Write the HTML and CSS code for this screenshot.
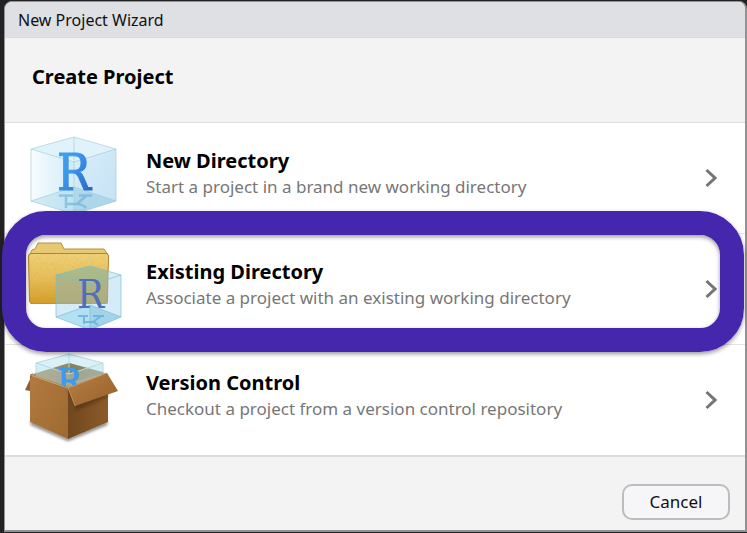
FILE: index.html
```html
<!DOCTYPE html>
<html lang="en">
<head>
<meta charset="utf-8">
<title>New Project Wizard</title>
<link rel="stylesheet" href="styles.css">
</head>
<body>
<main class="dialog">
  <header class="titlebar">New Project Wizard</header>
  <h1 class="heading">Create Project</h1>
  <div class="options">
    <button class="option" type="button">
      <svg class="icon" viewBox="24 123 100 110" aria-hidden="true">
        <defs>
          <linearGradient id="ink" x1="0" y1="0" x2="1" y2="1"><stop offset="0" stop-color="#3fa4f4"/><stop offset=".4" stop-color="#3c98ec"/><stop offset="1" stop-color="#2359c0"/></linearGradient>
          <linearGradient id="glassL"><stop offset="0" stop-color="#f7fcff"/><stop offset="1" stop-color="#d2ecf8"/></linearGradient>
          <linearGradient id="glassR" x1="0" y1="0" x2="1" y2="1"><stop offset="0" stop-color="#d9eefa"/><stop offset="1" stop-color="#c3e1f4"/></linearGradient>
        </defs>
        <path d="M31 149 74 137 116 149V201L74 214 31 201Z" fill="#e0f3fa"/>
        <path d="M31 149 74 162V214L31 201Z" fill="url(#glassL)"/>
        <path d="M74 162 116 149V201L74 214Z" fill="url(#glassR)"/>
        <path d="M31 201 74 187 116 201 74 214Z" fill="#a9d8ec" opacity=".45"/>
        <path d="M74 187 116 201 74 214Z" fill="#8ec5df" opacity=".3"/>
        <path d="M31 149 74 137 116 149V201L74 214 31 201ZM31 149 74 162 116 149M74 137V214M31 201 74 187 116 201" fill="none" stroke="#9fcbd5" stroke-opacity=".65"/>
        <text class="mark" x="57" y="190" font-size="50" fill="url(#ink)" stroke="url(#ink)">R</text>
        <path d="M59 195.500H73M79 195.500H92M66 195V208M87 195 77 204M66 204H78Q84 205 86 208" fill="none" stroke="#68add6" stroke-width="2.500" opacity=".6"/>
      </svg>
      <span class="copy"><strong class="name">New Directory</strong><span class="detail">Start a project in a brand new working directory</span></span>
      <svg class="chevron" viewBox="0 0 12 20" aria-hidden="true"><path d="M1.5 2 10 10 1.5 18"/></svg>
    </button>
    <button class="option selected" type="button">
      <svg class="icon" viewBox="24 234 100 110" aria-hidden="true">
        <defs>
          <linearGradient id="folder" x1="0" y1="0" x2="0" y2="1"><stop offset="0" stop-color="#efd27a"/><stop offset=".5" stop-color="#e6bd58"/><stop offset="1" stop-color="#d39c28"/></linearGradient>
          <filter id="grain" x="0" y="0" width="1" height="1"><feTurbulence type="fractalNoise" baseFrequency=".35" numOctaves="2" result="n"/><feColorMatrix in="n" values="0 0 0 0 .6 0 0 0 0 .4 0 0 0 0 .05 .5 0 0 0 -.18" result="t"/><feComposite in="t" in2="SourceGraphic" operator="in" result="s"/><feMerge><feMergeNode in="SourceGraphic"/><feMergeNode in="s"/></feMerge></filter>
        </defs>
        <path d="M29 256 32 250 35 249 38 243H61L64 249H104L108 255V260H29Z" fill="#e8c873" stroke="#b98e3d"/>
        <path d="M31 253.500H106Q109 254 108.500 257L107.500 301Q107 304 104 304H33Q30 304 29.500 301L28.500 257Q28 254 31 253.500Z" fill="url(#folder)" stroke="#b0802d" filter="url(#grain)"/>
        <path d="M56 275 90 266 121 275V317L90 330 56 317Z" fill="#b2daf2" opacity=".55"/>
        <path d="M56 275 90 266 108 271V279L90 285Z" fill="#789a55" opacity=".4"/>
        <path d="M56 275 90 285 108 279V304H56Z" fill="#95955a" opacity=".45"/>
        <path d="M56 317 90 305 121 317 90 330Z" fill="#9dd8ee" opacity=".6"/>
        <path d="M90 305 121 317 90 330Z" fill="#82bde0" opacity=".35"/>
        <path d="M56 275 90 266 121 275V317L90 330 56 317ZM56 275 90 285 121 275M90 305V330M56 317 90 305 121 317" fill="none" stroke="#77bfcd" stroke-opacity=".65"/>
        <text class="mark" x="77" y="308" font-size="40" fill="#4d70bb">R</text>
        <path d="M78 316H88M93 316H104M84 316V324M101 316 93 322M84 322H94L98 325" fill="none" stroke="#62a9d7" stroke-width="2" opacity=".75"/>
      </svg>
      <span class="copy"><strong class="name">Existing Directory</strong><span class="detail">Associate a project with an existing working directory</span></span>
      <svg class="chevron" viewBox="0 0 12 20" aria-hidden="true"><path d="M1.5 2 10 10 1.5 18"/></svg>
    </button>
    <button class="option" type="button">
      <svg class="icon" viewBox="24 345 100 110" aria-hidden="true">
        <defs>
          <linearGradient id="boxL" x1="0" y1="0" x2="1" y2="1"><stop offset="0" stop-color="#b07a40"/><stop offset="1" stop-color="#9f6a30"/></linearGradient>
          <linearGradient id="boxR"><stop offset="0" stop-color="#70481f"/><stop offset="1" stop-color="#8b5a29"/></linearGradient>
          <linearGradient id="flap" x1="0" y1="0" x2="1" y2="1"><stop offset="0" stop-color="#b98044"/><stop offset="1" stop-color="#95602b"/></linearGradient>
          <linearGradient id="inside"><stop offset="0" stop-color="#a99267"/><stop offset=".5" stop-color="#918968"/><stop offset="1" stop-color="#b2ab8f"/></linearGradient>
          <filter id="soft"><feGaussianBlur stdDeviation="1.500"/></filter>
          <clipPath id="opening"><path d="M20 340H120V369L68 388 30 375Z"/></clipPath>
        </defs>
        <path d="M30 421 68 438 108 421 107 425 68 441 31 425Z" fill="#444" opacity=".7" filter="url(#soft)"/>
        <path d="M36 363 69 354 103 363V375L69 388 36 376Z" fill="#daf1f7" stroke="#b3dbe3"/>
        <path d="M30 375 69 363 108 374 68 388Z" fill="url(#inside)"/>
        <path d="M69 363 103 372V374L69 383Z" fill="#847957" opacity=".6"/>
        <path d="M36 363 69 374 103 363V374L69 387 36 376Z" fill="#c7e8ed" opacity=".35"/>
        <path d="M36 363 69 374 103 363M69 354V374" fill="none" stroke="#b4dce5"/>
        <g clip-path="url(#opening)"><text class="mark" x="57" y="394" font-size="36" fill="#3c9bea" stroke="#3c9bea">R</text></g>
        <path d="M30 375 68 388V439L30 422Z" fill="url(#boxL)"/>
        <path d="M68 388 108 374V422L68 439Z" fill="url(#boxR)"/>
        <path d="M68 389 108 380V397L76 411Z" fill="#3d240d" opacity=".4" filter="url(#soft)"/>
        <path d="M33 373 30 375V391L25 390Z" fill="#906032"/>
        <path d="M68 388 107 373 118 391 75 406Z" fill="url(#flap)"/>
        <path d="M30 375 68 388 107 373M68 388 75 406" fill="none" stroke="#d3a36d" stroke-opacity=".7"/>
      </svg>
      <span class="copy"><strong class="name">Version Control</strong><span class="detail">Checkout a project from a version control repository</span></span>
      <svg class="chevron" viewBox="0 0 12 20" aria-hidden="true"><path d="M1.5 2 10 10 1.5 18"/></svg>
    </button>
  </div>
  <footer class="footer"><button class="cancel" type="button">Cancel</button></footer>
</main>
</body>
</html>
```
FILE: styles.css
```css
* { box-sizing: border-box; }

body {
  margin: 0;
  min-height: 100vh;
  display: flex;
  padding: 1px 0 1px 4px;
  background: #222224;
  font-family: "Noto Sans", "Open Sans", sans-serif;
  color: #111;
}

.dialog {
  flex: 1;
  display: flex;
  flex-direction: column;
  border: 1px solid #929294;
  border-bottom-width: 2px;
  border-right-width: 2px;
  border-radius: 8px 8px 0 0;
  background: #f3f3f3;
}

.titlebar {
  height: 36px;
  padding: 0 13px;
  border-bottom: 1px solid #d8d9dc;
  border-radius: 7px 7px 0 0;
  background: #dfe0e4;
  font-size: 16px;
  line-height: 36px;
}

.heading {
  margin: 0;
  height: 84px;
  padding: 0 27px;
  font-size: 20px;
  line-height: 78px;
  font-weight: 700;
  color: #000;
}

.options {
  border-top: 1px solid #dfdfdf;
  border-bottom: 2px solid #dcdcdc;
  background: #fff;
}

.option {
  position: relative;
  display: flex;
  align-items: center;
  width: 100%;
  height: 111px;
  padding: 0 28px 0 19px;
  border: 0;
  border-bottom: 1px solid #e4e4e4;
  background: #fff;
  font: inherit;
  color: #000;
  text-align: left;
}

.option:last-child {
  height: 110px;
  border-bottom: 0;
}

.selected { z-index: 1; }

.selected::after {
  content: "";
  position: absolute;
  inset: -23px 1px -8px -3px;
  border: 24px solid #4527ae;
  border-radius: 44px;
  box-shadow: 0 2px 4px rgba(0, 0, 0, .4), inset 0 2px 4px rgba(0, 0, 0, .4);
}

.icon {
  flex: none;
  width: 100px;
  height: 110px;
}

.mark { font-family: "DejaVu Serif Condensed", "DejaVu Serif", serif; }

.copy {
  flex: 1;
  display: flex;
  flex-direction: column;
  padding: 0 0 8px 22px;
}

.name {
  font-size: 20px;
  line-height: 26px;
}

.detail {
  font-size: 17px;
  line-height: 26px;
  color: #777;
}

.chevron {
  width: 12px;
  height: 20px;
  fill: none;
  stroke: #747474;
  stroke-width: 3;
}

.footer {
  flex: 1;
  display: flex;
  align-items: flex-start;
  justify-content: flex-end;
  padding: 27px 15px 10px;
}

.cancel {
  width: 108px;
  height: 36px;
  padding: 0 0 2px;
  border: 2px solid #bdbdbf;
  border-radius: 10px;
  background: #f6f6f8;
  font: inherit;
  font-size: 17px;
  color: #111;
}
```
